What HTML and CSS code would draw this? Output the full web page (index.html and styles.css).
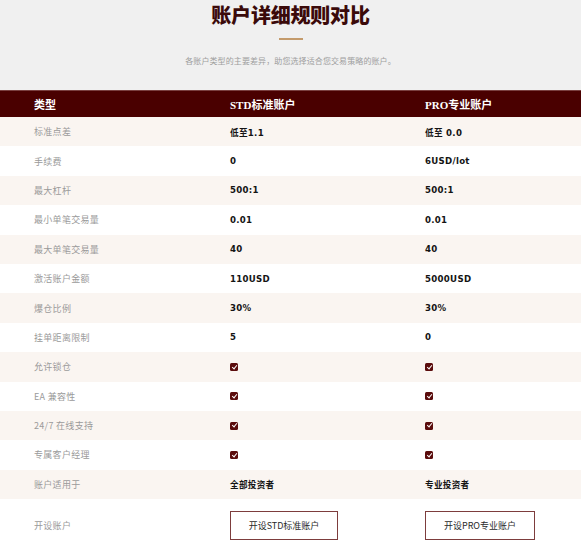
FILE: index.html
```html
<!DOCTYPE html>
<html lang="zh">
<head>
<meta charset="utf-8">
<title>账户详细规则对比</title>
<link rel="stylesheet" href="styles.css">
</head>
<body>
<section class="intro">
  <h1 class="title">账户详细规则对比</h1>
  <div class="divider"></div>
  <p class="subtitle">各账户类型的主要差异，助您选择适合您交易策略的账户。</p>
</section>
<div class="compare">
  <div class="row head">
    <div class="cell">类型</div>
    <div class="cell">STD标准账户</div>
    <div class="cell">PRO专业账户</div>
  </div>
  <div class="row alt"><div class="cell label">标准点差</div><div class="cell val">低至1.1</div><div class="cell val">低至 0.0</div></div>
  <div class="row"><div class="cell label">手续费</div><div class="cell val">0</div><div class="cell val">6USD/lot</div></div>
  <div class="row alt"><div class="cell label">最大杠杆</div><div class="cell val">500:1</div><div class="cell val">500:1</div></div>
  <div class="row"><div class="cell label">最小单笔交易量</div><div class="cell val">0.01</div><div class="cell val">0.01</div></div>
  <div class="row alt"><div class="cell label">最大单笔交易量</div><div class="cell val">40</div><div class="cell val">40</div></div>
  <div class="row"><div class="cell label">激活账户金额</div><div class="cell val">110USD</div><div class="cell val">5000USD</div></div>
  <div class="row alt"><div class="cell label">爆仓比例</div><div class="cell val">30%</div><div class="cell val">30%</div></div>
  <div class="row"><div class="cell label">挂单距离限制</div><div class="cell val">5</div><div class="cell val">0</div></div>
  <div class="row alt"><div class="cell label">允许锁仓</div><div class="cell"><span class="check"></span></div><div class="cell"><span class="check"></span></div></div>
  <div class="row"><div class="cell label">EA 兼容性</div><div class="cell"><span class="check"></span></div><div class="cell"><span class="check"></span></div></div>
  <div class="row alt"><div class="cell label">24/7 在线支持</div><div class="cell"><span class="check"></span></div><div class="cell"><span class="check"></span></div></div>
  <div class="row"><div class="cell label">专属客户经理</div><div class="cell"><span class="check"></span></div><div class="cell"><span class="check"></span></div></div>
  <div class="row alt"><div class="cell label">账户适用于</div><div class="cell val">全部投资者</div><div class="cell val">专业投资者</div></div>
  <div class="row last"><div class="cell label">开设账户</div><div class="cell"><a class="btn" href="#">开设STD标准账户</a></div><div class="cell"><a class="btn wide" href="#">开设PRO专业账户</a></div></div>
</div>
</body>
</html>
```

FILE: styles.css
```css
html, body {
  margin: 0;
  padding: 0;
  background: #ffffff;
}
body {
  font-family: "Noto Sans CJK SC", "Noto Sans", sans-serif;
  overflow: hidden;
}
.intro {
  height: 90px;
  background: #f0f0f0;
  display: flex;
  flex-direction: column;
  align-items: center;
  box-sizing: border-box;
  padding-top: 3px;
}
.title {
  margin: 0;
  font-size: 20px;
  line-height: 24px;
  font-weight: 900;
  color: #3b0a0a;
  letter-spacing: -0.2px;
}
.divider {
  width: 24px;
  height: 2px;
  background: #c49b6c;
  margin-top: 11px;
}
.subtitle {
  margin: 15px 0 0;
  font-size: 8px;
  line-height: 12px;
  color: #9e9e9e;
  letter-spacing: 0.1px;
}
.compare {
  display: flex;
  flex-direction: column;
}
.row {
  display: grid;
  grid-template-columns: 196px 195px 1fr;
  height: 29.4px;
  align-items: center;
  background: #ffffff;
}
.row.alt {
  background: #faf5f1;
}
.row.head {
  height: 27px;
  background: #4a0000;
  border-top: 1px solid #7a4040;
  box-sizing: border-box;
  color: #ffffff;
  font-family: "Liberation Serif", "Noto Sans CJK SC", serif;
  font-weight: 700;
  font-size: 11px;
}
.row.head .cell:first-child {
  font-family: "Noto Sans CJK SC", sans-serif;
}
.row.last {
  height: 53px;
}
.cell {
  padding-left: 34px;
  display: flex;
  align-items: center;
}
.label {
  font-size: 9px;
  color: #9a9a9a;
  letter-spacing: 0.3px;
}
.val {
  font-family: "DejaVu Sans", "Noto Sans CJK SC", sans-serif;
  font-weight: 700;
  font-size: 8.6px;
  color: #141414;
  letter-spacing: 0.3px;
}
.check {
  width: 8px;
  height: 8px;
  border-radius: 1.5px;
  background: #5a0c0c;
  position: relative;
  display: block;
}
.check::after {
  content: "";
  position: absolute;
  left: 2.6px;
  top: 0.8px;
  width: 2px;
  height: 4.2px;
  border: solid #ffffff;
  border-width: 0 1.2px 1.2px 0;
  transform: rotate(40deg);
}
.btn {
  display: flex;
  align-items: center;
  justify-content: center;
  width: 108px;
  height: 29px;
  box-sizing: border-box;
  border: 1px solid #7d3d3d;
  font-size: 9px;
  color: #2a2a2a;
  text-decoration: none;
  font-family: "Noto Sans CJK SC", sans-serif;
}
.btn.wide {
  width: 110px;
}
```
